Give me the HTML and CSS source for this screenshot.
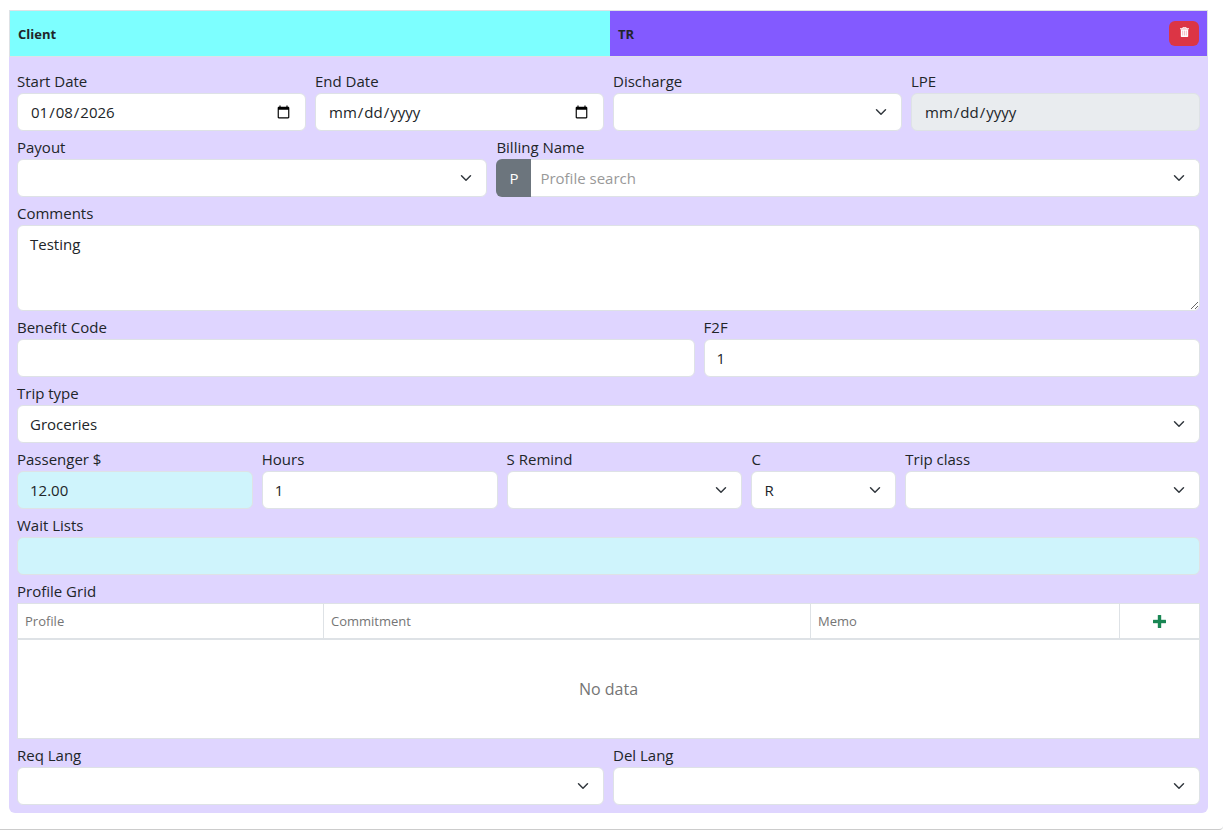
FILE: index.html
```html
<!DOCTYPE html>
<html lang="en">
<head>
<meta charset="utf-8">
<meta name="viewport" content="width=device-width, initial-scale=1">
<title>Client</title>
<link rel="stylesheet" href="styles.css">
</head>
<body>
<main class="page">
  <form class="panel">
    <header class="panel-head">
      <div class="head-cell head-client">Client</div>
      <div class="head-cell head-tr">TR
        <button type="button" class="btn-delete" aria-label="Delete">
          <svg width="9" height="10" viewBox="0 0 10 11" aria-hidden="true"><path fill="#fff" d="M3.2 0h3.6l.6 1.2H10v1.2H0V1.200h2.600zM3.700.7l-.3.5h3.200L6.300.7z"/><path fill="#fff" d="M.9 2.400h8.200v7.800a.8.8 0 0 1-.8.8H1.700a.8.8 0 0 1-.8-.8z"/><path stroke="#dc3545" stroke-opacity=".5" stroke-width=".7" d="M3 4v5.400M5 4v5.400M7 4v5.400"/></svg>
        </button>
      </div>
    </header>
    <div class="panel-body">
      <div class="row row-quarters">
        <div class="field"><label for="start">Start Date</label><input class="control" type="date" id="start" value="2026-01-08"></div>
        <div class="field"><label for="end">End Date</label><input class="control" type="date" id="end"></div>
        <div class="field"><label for="discharge">Discharge</label><select class="control select" id="discharge"><option></option></select></div>
        <div class="field"><label for="lpe">LPE</label><input class="control locked" type="date" id="lpe" readonly></div>
      </div>
      <div class="row row-billing">
        <div class="field"><label for="payout">Payout</label><select class="control select" id="payout"><option></option></select></div>
        <div class="field"><label for="billing">Billing Name</label>
          <div class="group"><button type="button" class="btn-profile">P</button><input class="control select search" type="text" id="billing" placeholder="Profile search"></div>
        </div>
      </div>
      <div class="row">
        <div class="field"><label for="comments">Comments</label><textarea class="control" id="comments" rows="3">Testing</textarea></div>
      </div>
      <div class="row row-benefit">
        <div class="field"><label for="benefit">Benefit Code</label><input class="control" type="text" id="benefit"></div>
        <div class="field"><label for="f2f">F2F</label><input class="control" type="text" id="f2f" value="1"></div>
      </div>
      <div class="row">
        <div class="field"><label for="trip">Trip type</label><select class="control select" id="trip"><option>Groceries</option></select></div>
      </div>
      <div class="row row-trip">
        <div class="field"><label for="passenger">Passenger $</label><input class="control info" type="text" id="passenger" value="12.00"></div>
        <div class="field"><label for="hours">Hours</label><input class="control" type="text" id="hours" value="1"></div>
        <div class="field"><label for="remind">S Remind</label><select class="control select" id="remind"><option></option></select></div>
        <div class="field"><label for="c">C</label><select class="control select" id="c"><option>R</option></select></div>
        <div class="field"><label for="class">Trip class</label><select class="control select" id="class"><option></option></select></div>
      </div>
      <div class="row">
        <div class="field"><label for="wait">Wait Lists</label><input class="control info" type="text" id="wait"></div>
      </div>
      <div class="row">
        <div class="field"><div class="label" id="grid-label">Profile Grid</div>
          <table class="grid" aria-labelledby="grid-label">
            <colgroup><col class="col-profile"><col class="col-commitment"><col class="col-memo"><col class="col-add"></colgroup>
            <thead><tr><th>Profile</th><th>Commitment</th><th>Memo</th><th class="add-cell"><button type="button" class="btn-add" aria-label="Add profile"><svg width="13" height="13" viewBox="0 0 13 13" aria-hidden="true"><path fill="#198754" d="M5.500 0h2a.5.5 0 0 1 .5.5V5h4.500a.5.5 0 0 1 .5.5v2a.5.5 0 0 1-.5.5H8v4.500a.5.5 0 0 1-.5.5h-2a.5.5 0 0 1-.5-.5V8H.5a.5.5 0 0 1-.5-.5v-2A.5.5 0 0 1 .5 5H5V.5a.5.5 0 0 1 .5-.5z" stroke="#198754" stroke-width=".4"/></svg></button></th></tr></thead>
            <tbody><tr><td colspan="4">No data</td></tr></tbody>
          </table>
        </div>
      </div>
      <div class="row row-halves">
        <div class="field"><label for="req">Req Lang</label><select class="control select" id="req"><option></option></select></div>
        <div class="field"><label for="del">Del Lang</label><select class="control select" id="del"><option></option></select></div>
      </div>
    </div>
  </form>
</main>
</body>
</html>
```
FILE: styles.css
```css
* { box-sizing: border-box; }

body {
  margin: 0;
  background: #fff;
  color: #212529;
  font: 15px/24px "Segoe UI", "Open Sans", "Noto Sans", sans-serif;
}

.page {
  padding: 10px 15px 16px 9px;
  border-bottom: 1px solid #ccc;
  border-bottom-right-radius: 4px;
}

.panel {
  background: #dfd5ff;
  border-radius: 0 0 6px 6px;
}

.panel-head {
  display: grid;
  grid-template-columns: 601fr 598fr;
  border: 1px solid #dee2e6;
}

.head-cell {
  display: flex;
  align-items: center;
  justify-content: space-between;
  height: 45px;
  padding: 0 8px;
  font-size: 13px;
  font-weight: 700;
}

.head-client { background: #7dffff; }
.head-tr { background: #835aff; }

.btn-delete {
  display: flex;
  justify-content: center;
  width: 30px;
  height: 25px;
  padding: 6px 0;
  border: 0;
  border-radius: 6px;
  background: #dc3545;
}

.panel-body {
  display: grid;
  gap: 4px;
  padding: 12px 8px 8px;
}

.row {
  display: grid;
  grid-template-columns: minmax(0, 1fr);
  gap: 9px;
}

.row-quarters { grid-template-columns: repeat(4, minmax(0, 1fr)); }
.row-halves { grid-template-columns: repeat(2, minmax(0, 1fr)); }
.row-billing { grid-template-columns: minmax(0, 470fr) minmax(0, 703fr); }
.row-benefit { grid-template-columns: minmax(0, 677fr) minmax(0, 496fr); }
.row-trip { grid-template-columns: minmax(0, 236fr) minmax(0, 236fr) minmax(0, 236fr) minmax(0, 145fr) minmax(0, 295fr); }

label,
.label { display: block; }

.control {
  display: block;
  width: 100%;
  height: 38px;
  margin: 0;
  padding: 6px 12px;
  border: 1px solid #dee2e6;
  border-radius: 6px;
  background-color: #fff;
  color: #212529;
  font: inherit;
  appearance: none;
}

textarea.control {
  height: 86px;
  resize: vertical;
}

.control::-webkit-datetime-edit { padding: 0; }

.select {
  padding-right: 36px;
  background-image: url("data:image/svg+xml,%3csvg xmlns='http://www.w3.org/2000/svg' viewBox='0 0 16 16'%3e%3cpath fill='none' stroke='%23343a40' stroke-linecap='round' stroke-linejoin='round' stroke-width='2' d='m2 5 6 6 6-6'/%3e%3c/svg%3e");
  background-repeat: no-repeat;
  background-position: right 12px center;
  background-size: 16px 12px;
}

.locked { background-color: #e9ecef; }
.locked::-webkit-calendar-picker-indicator { display: none; }
.info { background-color: #cff4fc; }

.group { display: flex; }

.btn-profile {
  flex: none;
  width: 35px;
  padding: 0;
  border: 0;
  border-radius: 6px 0 0 6px;
  background: #6c757d;
  color: #fff;
  font: inherit;
}

.search {
  padding-left: 9px;
  border-left: 0;
  border-radius: 0 6px 6px 0;
}

.search::placeholder { color: #999; }

.grid {
  width: 100%;
  table-layout: fixed;
  border-collapse: separate;
  border-spacing: 0;
  border: 1px solid #dee2e6;
  background: #fff;
  color: #757575;
}

.col-profile { width: 305px; }
.col-commitment { width: 487px; }
.col-add { width: 80px; }

.grid th {
  height: 36px;
  padding: 0 7px;
  border-bottom: 2px solid #dee2e6;
  font-size: 13px;
  font-weight: 400;
  text-align: left;
}

.grid th + th { border-left: 1px solid #dee2e6; }

.grid .add-cell { padding: 0; }

.btn-add {
  display: flex;
  margin: 0 auto;
  padding: 0;
  border: 0;
  background: none;
}

.grid td {
  height: 98px;
  padding: 0;
  font-size: 16px;
  text-align: center;
}
```
